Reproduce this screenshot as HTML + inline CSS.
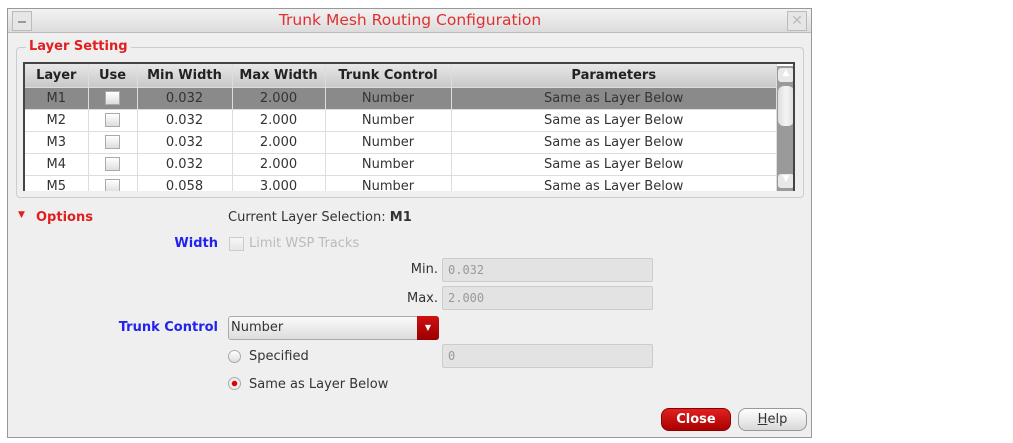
<!DOCTYPE html>
<html><head><style>
*{box-sizing:border-box;margin:0;padding:0}
body{width:1013px;height:443px;background:#fff;font-family:"DejaVu Sans","Liberation Sans",sans-serif;font-size:13px;color:#333;position:relative;overflow:hidden}
.a{position:absolute}
.win{left:7px;top:8px;width:805px;height:430px;background:#efefef;border:1px solid #999}
.title{left:8px;top:9px;width:803px;height:24px;background:linear-gradient(#f2f2f2,#dcdcdc);border-bottom:1px solid #bbb}
.tb{width:20px;height:20px;border:1px solid #bbb;background:#e6e6e6}
table{border-collapse:collapse;font-size:13px}
td,th{height:22px;text-align:center;border-right:1px solid #ddd;border-bottom:1px solid #ddd;padding:0}
th{background:linear-gradient(#e8e8e8,#c8c8c8);font-weight:bold;color:#222;height:23px}
.sel td{background:#8a8a8a;color:#333}
.cb{display:inline-block;width:15px;height:14px;border:1px solid #aaa;background:linear-gradient(#fff,#ddd);vertical-align:middle}
.fld{background:#e3e3e3;border:1px solid #ccc;border-radius:2px;height:24px;font-family:"DejaVu Sans Mono","Liberation Mono",monospace;font-size:12px;color:#999;padding:4px 5px}
.red{color:#e02020;font-weight:bold}
.blue{color:#2222ee;font-weight:bold}
</style></head><body>
<div class="a win"></div>
<div class="a title"></div>
<div class="a tb" style="left:12px;top:11px"><div class="a" style="left:5px;top:9px;width:8px;height:2px;background:#999"></div></div>
<div class="a tb" style="left:787px;top:11px;color:#bbb;font-size:14px;text-align:center;line-height:18px">✕</div>
<div class="a" style="left:0;width:820px;top:11px;text-align:center;color:#e03030;font-size:15.5px">Trunk Mesh Routing Configuration</div>

<div class="a" style="left:16px;top:47px;width:788px;height:151px;border:1px solid #ccc;border-radius:4px"></div>
<div class="a red" style="left:26px;top:39px;background:#efefef;padding:0 3px;font-size:13px">Layer Setting</div>

<div class="a" style="left:23px;top:62px;width:772px;height:129px;border:2px solid #444;border-bottom:none;overflow:hidden;background:#fff">
<table style="width:752px">
<tr><th style="width:63px">Layer</th><th style="width:49px">Use</th><th style="width:95px">Min Width</th><th style="width:93px">Max Width</th><th style="width:126px">Trunk Control</th><th>Parameters</th></tr>
<tr class="sel"><td>M1</td><td><span class="cb"></span></td><td>0.032</td><td>2.000</td><td>Number</td><td>Same as Layer Below</td></tr>
<tr><td>M2</td><td><span class="cb"></span></td><td>0.032</td><td>2.000</td><td>Number</td><td>Same as Layer Below</td></tr>
<tr><td>M3</td><td><span class="cb"></span></td><td>0.032</td><td>2.000</td><td>Number</td><td>Same as Layer Below</td></tr>
<tr><td>M4</td><td><span class="cb"></span></td><td>0.032</td><td>2.000</td><td>Number</td><td>Same as Layer Below</td></tr>
<tr><td>M5</td><td><span class="cb"></span></td><td>0.058</td><td>3.000</td><td>Number</td><td>Same as Layer Below</td></tr>
</table>
<div class="a" style="left:752px;top:2px;width:18px;height:125px;background:#9a9a9a"></div>
<div class="a" style="left:753px;top:4px;width:16px;height:14px;background:#e8e8e8;border-radius:3px;color:#fff;font-size:9px;text-align:center">▲</div>
<div class="a" style="left:753px;top:22px;width:16px;height:40px;background:linear-gradient(90deg,#ddd,#f4f4f4,#ddd);border-radius:6px"></div>
<div class="a" style="left:753px;top:110px;width:16px;height:14px;background:#e8e8e8;border-radius:3px;color:#fff;font-size:9px;text-align:center">▼</div>
</div>

<div class="a" style="left:18px;top:210px;color:#e02020;font-size:9px">▼</div>
<div class="a red" style="left:36px;top:210px">Options</div>
<div class="a" style="left:228px;top:210px">Current Layer Selection: <b>M1</b></div>
<div class="a blue" style="left:100px;width:118px;text-align:right;top:236px">Width</div>
<span class="a cb" style="left:229px;top:237px;opacity:.5"></span>
<div class="a" style="left:249px;top:236px;color:#bbb">Limit WSP Tracks</div>
<div class="a" style="left:380px;width:58px;text-align:right;top:262px">Min.</div>
<div class="a fld" style="left:442px;top:258px;width:211px">0.032</div>
<div class="a" style="left:380px;width:58px;text-align:right;top:291px">Max.</div>
<div class="a fld" style="left:442px;top:286px;width:211px">2.000</div>
<div class="a blue" style="left:80px;width:138px;text-align:right;top:320px">Trunk Control</div>
<div class="a" style="left:228px;top:316px;width:211px;height:24px;border:1px solid #aaa;border-radius:3px;background:linear-gradient(#fafafa,#ddd);padding:3px 2px">Number</div>
<div class="a" style="left:417px;top:316px;width:22px;height:24px;background:linear-gradient(#d01010,#900);border-radius:0 3px 3px 0;color:#fff;font-size:8px;text-align:center;line-height:24px">▼</div>
<div class="a" style="left:228px;top:350px;width:13px;height:13px;border:1px solid #aaa;border-radius:50%;background:linear-gradient(#fff,#ddd)"></div>
<div class="a" style="left:249px;top:349px">Specified</div>
<div class="a fld" style="left:442px;top:344px;width:211px">0</div>
<div class="a" style="left:228px;top:377px;width:13px;height:13px;border:1px solid #aaa;border-radius:50%;background:radial-gradient(circle,#d00 30%,#eee 40%)"></div>
<div class="a" style="left:249px;top:377px">Same as Layer Below</div>

<div class="a" style="left:661px;top:408px;width:70px;height:23px;border-radius:8px;background:linear-gradient(#e02020,#a00);color:#fff;font-weight:bold;text-align:center;line-height:22px;border:1px solid #800">Close</div>
<div class="a" style="left:738px;top:408px;width:69px;height:23px;border-radius:8px;background:linear-gradient(#fff,#d8d8d8);text-align:center;line-height:22px;border:1px solid #999"><u>H</u>elp</div>
</body></html>
